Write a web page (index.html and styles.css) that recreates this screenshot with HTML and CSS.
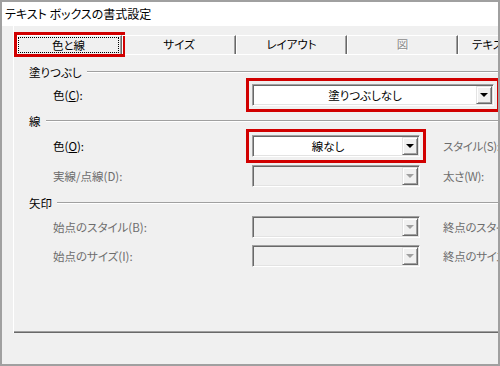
FILE: index.html
```html
<!DOCTYPE html>
<html lang="ja">
<head>
<meta charset="utf-8">
<title>テキスト ボックスの書式設定</title>
<link rel="stylesheet" href="styles.css">
</head>
<body>
<div class="window">
  <div class="titlebar">テキスト ボックスの書式設定</div>
  <div class="client">
    <div class="tabctl">
      <div class="tabs">
        <div class="tab active"><span class="focus">色と線</span></div>
        <div class="tab first-inactive">サイズ</div>
        <div class="tab">レイアウト</div>
        <div class="tab disabled">図</div>
        <div class="tab">テキスト ボックス</div>
      </div>
      <div class="panel">
        <div class="heading mt9"><span>塗りつぶし</span><i class="rule"></i></div>
        <div class="row mt4">
          <span class="label">色(<u>C</u>):</span>
          <div class="combo wide marked"><span class="value">塗りつぶしなし</span><span class="btn"><i class="arrow"></i></span></div>
        </div>

        <div class="heading mt7"><span>線</span><i class="rule"></i></div>
        <div class="row mt6">
          <span class="label">色(<u>O</u>):</span>
          <div class="combo marked"><span class="value">線なし</span><span class="btn"><i class="arrow"></i></span></div>
          <span class="side">スタイル(S):</span>
        </div>
        <div class="row mt8">
          <span class="label off">実線/点線(D):</span>
          <div class="combo disabled"><span class="value"></span><span class="btn"><i class="arrow"></i></span></div>
          <span class="side">太さ(W):</span>
        </div>

        <div class="heading mt8"><span>矢印</span><i class="rule"></i></div>
        <div class="row mt5">
          <span class="label off">始点のスタイル(B):</span>
          <div class="combo disabled"><span class="value"></span><span class="btn"><i class="arrow"></i></span></div>
          <span class="side">終点のスタイル(E):</span>
        </div>
        <div class="row mt7">
          <span class="label off">始点のサイズ(I):</span>
          <div class="combo disabled"><span class="value"></span><span class="btn"><i class="arrow"></i></span></div>
          <span class="side">終点のサイズ(Z):</span>
        </div>
      </div>
    </div>
  </div>
</div>
</body>
</html>
```

FILE: styles.css
```css
html, body {
  margin: 0;
  padding: 0;
}

body {
  width: 500px;
  height: 366px;
  overflow: hidden;
  font-family: "Noto Sans CJK JP", "Noto Sans", sans-serif;
  font-size: 11.5px;
  font-feature-settings: "palt";
  color: #000;
  background: #f0f0f0;
}

.window {
  box-sizing: border-box;
  width: 500px;
  height: 366px;
  border: 2px solid #a0a0a0;
  background: #f0f0f0;
  overflow: hidden;
  display: flex;
  flex-direction: column;
}

.titlebar {
  flex: none;
  height: 24px;
  line-height: 23px;
  background: #fff;
  padding-left: 3px;
  white-space: nowrap;
  font-size: 12px;
}

.client {
  flex: 1;
  padding-left: 11px;
}

.tabctl {
  border-left: 1px solid #fff;
  padding-top: 9px;
  margin-right: -40px;
}

.tabs {
  display: flex;
  height: 19px;
  white-space: nowrap;
}

.tab {
  flex: none;
  box-sizing: border-box;
  width: 111px;
  height: 19px;
  border-top: 1px solid #fff;
  border-left: 1px solid #fff;
  border-right: 1px solid #696969;
  box-shadow: inset -1px 0 #a0a0a0;
  text-align: center;
  line-height: 17px;
  overflow: hidden;
}

.tab.first-inactive {
  width: 114px;
}

.tab.active {
  width: 105px;
  margin-left: 3px;
  padding: 1px 2px 1px 0;
  outline: 3px solid #d10000;
  outline-offset: 0;
}

.focus {
  display: block;
  box-sizing: border-box;
  height: 16px;
  line-height: 14px;
  border: 1px dotted #000;
}

.tab.disabled {
  color: #8c8c8c;
  text-shadow: 1px 1px #fff;
}

.panel {
  box-sizing: border-box;
  height: 279px;
  border-top: 1px solid #fff;
  border-bottom: 1px solid #696969;
  box-shadow: inset 0 -1px #a0a0a0;
}

.heading {
  display: flex;
  align-items: center;
  height: 16px;
  padding-left: 15px;
  white-space: nowrap;
}

.rule {
  flex: 1;
  height: 0;
  border-top: 1px solid #a0a0a0;
  border-bottom: 1px solid #fff;
  margin-left: 5px;
}

.row {
  display: flex;
  align-items: center;
  height: 22px;
  padding-left: 39px;
  white-space: nowrap;
}

.label {
  flex: none;
  width: 199px;
}

.label.off,
.side {
  color: #6d6d6d;
}

.side {
  flex: none;
  margin-left: 23px;
  letter-spacing: -0.3px;
}

.combo {
  flex: none;
  box-sizing: border-box;
  width: 168px;
  height: 22px;
  padding: 1px;
  border: 1px solid;
  border-color: #a0a0a0 #fff #fff #a0a0a0;
  box-shadow: inset 1px 1px #696969, inset -1px -1px #e3e3e3;
  background: #fff;
  display: flex;
}

.combo.wide {
  width: 242px;
}

.combo.disabled {
  background: #f0f0f0;
}

.combo.marked {
  outline: 3px solid #d10000;
  outline-offset: 3px;
}

.value {
  flex: 1;
  text-align: center;
  line-height: 18px;
}

.btn {
  flex: none;
  box-sizing: border-box;
  width: 16px;
  border: 1px solid;
  border-color: #e3e3e3 #696969 #696969 #e3e3e3;
  box-shadow: inset 1px 1px #fff, inset -1px -1px #a0a0a0;
  background: #f0f0f0;
  display: flex;
  align-items: center;
  justify-content: center;
}

.arrow {
  width: 0;
  height: 0;
  border-left: 4px solid transparent;
  border-right: 4px solid transparent;
  border-top: 4px solid #000;
}

.disabled .arrow {
  border-top-color: #a0a0a0;
}

.mt4 { margin-top: 4px; }
.mt5 { margin-top: 5px; }
.mt6 { margin-top: 6px; }
.mt7 { margin-top: 7px; }
.mt8 { margin-top: 8px; }
.mt9 { margin-top: 9px; }
```
